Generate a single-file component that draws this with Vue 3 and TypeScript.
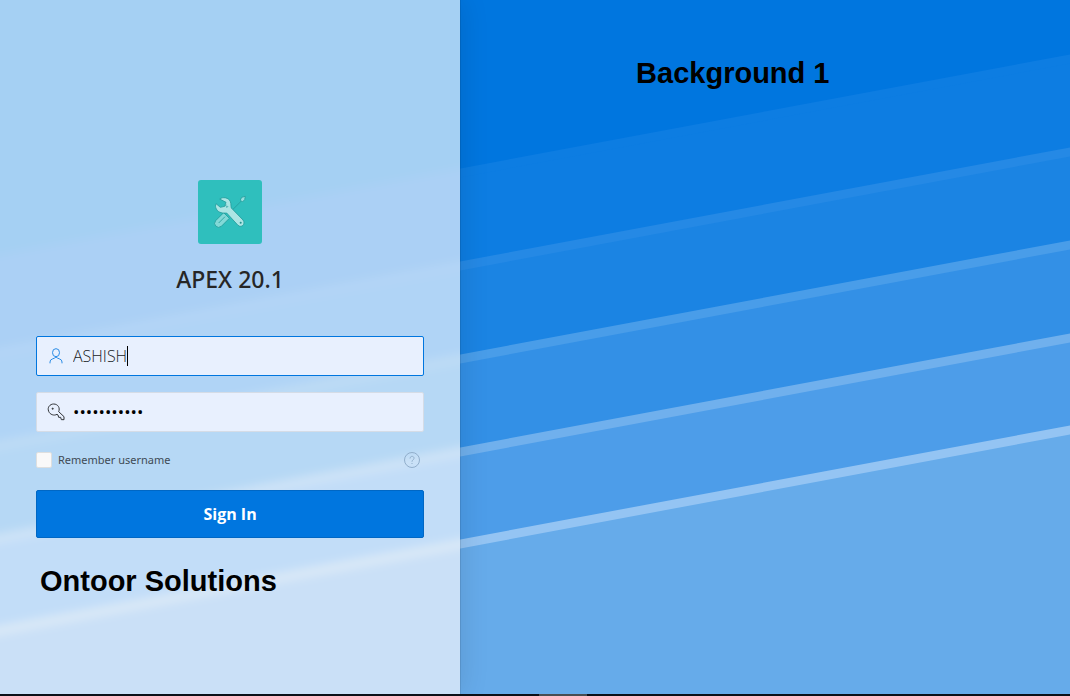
<script setup lang="ts">
import { ref } from 'vue'

interface Stripe {
  top: number
  fill: string
  glow: string
  panelFill: string
  panelGlow: string
}

const username = ref('ASHISH')
const password = ref('ontoor12345')
const remember = ref(false)

const rise = 201
const stripes: Stripe[] = [
  { top: 255, fill: '#0d7de2', glow: '#0d7de2', panelFill: '#abd0f5', panelGlow: '#abd0f5' },
  { top: 348, fill: '#1b84e3', glow: '#2589e5', panelFill: '#b0d4f6', panelGlow: '#b4d5f6' },
  { top: 441, fill: '#3390e6', glow: '#499de9', panelFill: '#b6d8f5', panelGlow: '#bfdcf5' },
  { top: 534, fill: '#4d9de9', glow: '#70b0ed', panelFill: '#c2ddf8', panelGlow: '#d0e4f7' },
  { top: 626, fill: '#66abea', glow: '#94c4f3', panelFill: '#cae0f7', panelGlow: '#dceaf7' },
]

const slope = (top: number): string => `-200,${top + 37} 1270,${top - rise - 37} 1270,1000 -200,1000`
</script>

<template>
  <div class="page">
    <main class="stage">
      <svg class="scene" viewBox="0 0 1070 694" preserveAspectRatio="none" aria-hidden="true">
        <rect width="1070" height="694" fill="#0076df" />
        <template v-for="s in stripes" :key="s.top">
          <polygon :points="slope(s.top)" :fill="s.glow" />
          <polygon :points="slope(s.top + 9)" :fill="s.fill" />
        </template>
      </svg>

      <section class="panel">
        <div class="frost">
          <svg class="scene soft" viewBox="0 0 1070 694" preserveAspectRatio="none" aria-hidden="true">
            <rect x="-100" y="-100" width="1270" height="894" fill="#a5d0f3" />
            <template v-for="s in stripes" :key="s.top">
              <polygon :points="slope(s.top)" :fill="s.panelGlow" />
              <polygon :points="slope(s.top + 9)" :fill="s.panelFill" />
            </template>
          </svg>
        </div>

        <form class="login" @submit.prevent>
          <svg class="logo" viewBox="24 24 192 192" aria-hidden="true">
            <rect x="24" y="24" width="192" height="192" rx="9" fill="#2fbfbd" />
            <g stroke="#249c9b" stroke-width="2.500" stroke-linejoin="round">
              <path d="M128 113L153 88" fill="none" />
              <path d="M151 84L155 76L166 73L164 83L157 90Z" fill="#97dfde" />
              <path d="M101 122L77 146Q70 155 77 162Q85 170 94 163L118 139Z" fill="#82d9d7" />
              <path d="M105 134L86 153" fill="none" />
              <path d="M89 81C98 74 116 76 121 89C124 96 122 103 124 108L159 144C168 156 155 169 144 160L110 123C100 124 85 123 79 111C76 106 76 100 78 95L91 106L104 103L108 91Z" fill="#ace5e4" />
              <path d="M105 103L109 98M109 108L114 103M113 103L108 103" fill="none" stroke-width="2" />
            </g>
            <circle cx="152" cy="152" r="3" fill="#24908f" />
          </svg>
          <h1 class="title">APEX 20.1</h1>

          <label class="field active">
            <svg class="glyph" viewBox="0 0 60 60" fill="none" stroke="#2b8ce6" stroke-width="3" aria-hidden="true">
              <ellipse cx="30" cy="20" rx="10.500" ry="12" />
              <path d="M12 52V48Q12 41 19 39L26 36Q30 30 34 36L41 39Q48 41 48 48V52" />
            </svg>
            <input v-model="username" class="entry name" type="text" aria-label="Username" autocomplete="off" />
            <span class="caret"></span>
          </label>

          <label class="field">
            <svg class="glyph" viewBox="0 0 60 60" fill="none" stroke="#303337" stroke-width="3" stroke-linejoin="round" aria-hidden="true">
              <path d="M33 37C24 42 12 38 8 28C3 16 12 6 23 6C36 6 43 18 38 29L54 44V53H46L44 46H38L36 39Z" />
              <circle cx="20" cy="20" r="2" fill="#303337" stroke-width="2" />
            </svg>
            <input v-model="password" class="entry secret" type="password" aria-label="Password" autocomplete="off" />
          </label>

          <div class="options">
            <label class="remember">
              <input v-model="remember" class="tick" type="checkbox" />
              <span>Remember username</span>
            </label>
            <button class="help" type="button" aria-label="Help">
              <svg viewBox="0 0 16 16" fill="none" stroke="#91aecb" aria-hidden="true">
                <circle cx="8" cy="8" r="7.500" />
                <path d="M6 6.500C6 3.500 10.300 3.800 10 6.400C9.800 7.900 8 8 8 9.700M8 11V12" />
              </svg>
            </button>
          </div>

          <button class="submit" type="submit">Sign In</button>
        </form>
        <p class="caption brand">Ontoor Solutions</p>
      </section>

      <section class="view">
        <h2 class="caption">Background 1</h2>
      </section>
    </main>
    <div class="scrollbar"><div class="thumb"></div></div>
  </div>
</template>

<style>
body {
  margin: 0;
}
</style>

<style scoped>
* {
  box-sizing: border-box;
}
.page {
  display: flex;
  flex-direction: column;
  min-height: 100vh;
  font-family: "Open Sans", "Noto Sans", sans-serif;
}
.stage {
  position: relative;
  display: flex;
  flex: 1;
  overflow: hidden;
}
.scene {
  position: absolute;
  inset: 0;
  width: 100%;
  height: 100%;
}
.panel {
  position: relative;
  flex: 0 0 43%;
  padding: 180px 36px 36px;
  box-shadow: 0 0 1px rgba(0, 0, 0, 0.5), 0 0 28px rgba(0, 0, 0, 0.12);
}
.frost {
  position: absolute;
  inset: 0;
  overflow: hidden;
}
.soft {
  width: 100vw;
  overflow: visible;
  filter: blur(5px);
}
.login {
  position: relative;
  display: flex;
  flex-direction: column;
}
.logo {
  align-self: center;
  width: 64px;
  height: 64px;
}
.title {
  margin: 19px 0 41px;
  font-family: "Noto Sans", sans-serif;
  font-size: 23px;
  font-weight: 500;
  line-height: 32px;
  text-align: center;
  color: #262626;
}
.field {
  display: flex;
  align-items: center;
  height: 40px;
  margin-bottom: 16px;
  padding: 0 9px;
  border: 1px solid #d5dce6;
  border-radius: 2px;
  background: #e8f0fe;
  cursor: text;
}
.active {
  border-color: #0076df;
}
.glyph {
  flex: none;
  width: 20px;
  height: 20px;
  margin-right: 7px;
}
.entry {
  padding: 0;
  border: 0;
  outline: 0;
  background: transparent;
  color: #202326;
  font-family: "Open Sans", "Noto Sans", sans-serif;
  font-size: 16px;
  line-height: 22px;
}
.name {
  field-sizing: content;
  font-weight: 300;
}
.secret {
  flex: 1;
  color: #000;
  font-size: 17px;
}
.caret {
  width: 1px;
  height: 20px;
  background: #000;
}
.options {
  display: flex;
  align-items: center;
  justify-content: space-between;
  height: 24px;
  margin-bottom: 18px;
  padding-right: 4px;
}
.remember {
  display: flex;
  align-items: center;
  gap: 6px;
  font-family: "Noto Sans", sans-serif;
  font-size: 11px;
  line-height: 16px;
  color: #404a54;
}
.tick {
  appearance: none;
  width: 16px;
  height: 16px;
  margin: 0;
  border: 1px solid #dedfdf;
  border-radius: 2px;
  background: #f9f9f9;
}
.tick:checked {
  background: #0076df;
}
.help {
  width: 16px;
  height: 16px;
  padding: 0;
  border: 0;
  background: none;
}
.help svg {
  display: block;
}
.submit {
  height: 48px;
  border: 1px solid #0067c4;
  border-radius: 2px;
  background: #0076df;
  color: #fff;
  font-family: "Open Sans", "Noto Sans", sans-serif;
  font-size: 16px;
  font-weight: 700;
}
.caption {
  margin: 0;
  font-family: "Liberation Sans", Arial, sans-serif;
  font-size: 29px;
  font-weight: 700;
  line-height: 34px;
  color: #000;
}
.brand {
  position: relative;
  padding: 26px 0 0 4px;
}
.view {
  position: relative;
  flex: 1;
  padding: 56px 0 0 176px;
}
.scrollbar {
  display: flex;
  justify-content: center;
  height: 2px;
  padding-left: 56px;
  background: #0b1018;
}
.thumb {
  width: 48px;
  background: #484d52;
}
</style>
